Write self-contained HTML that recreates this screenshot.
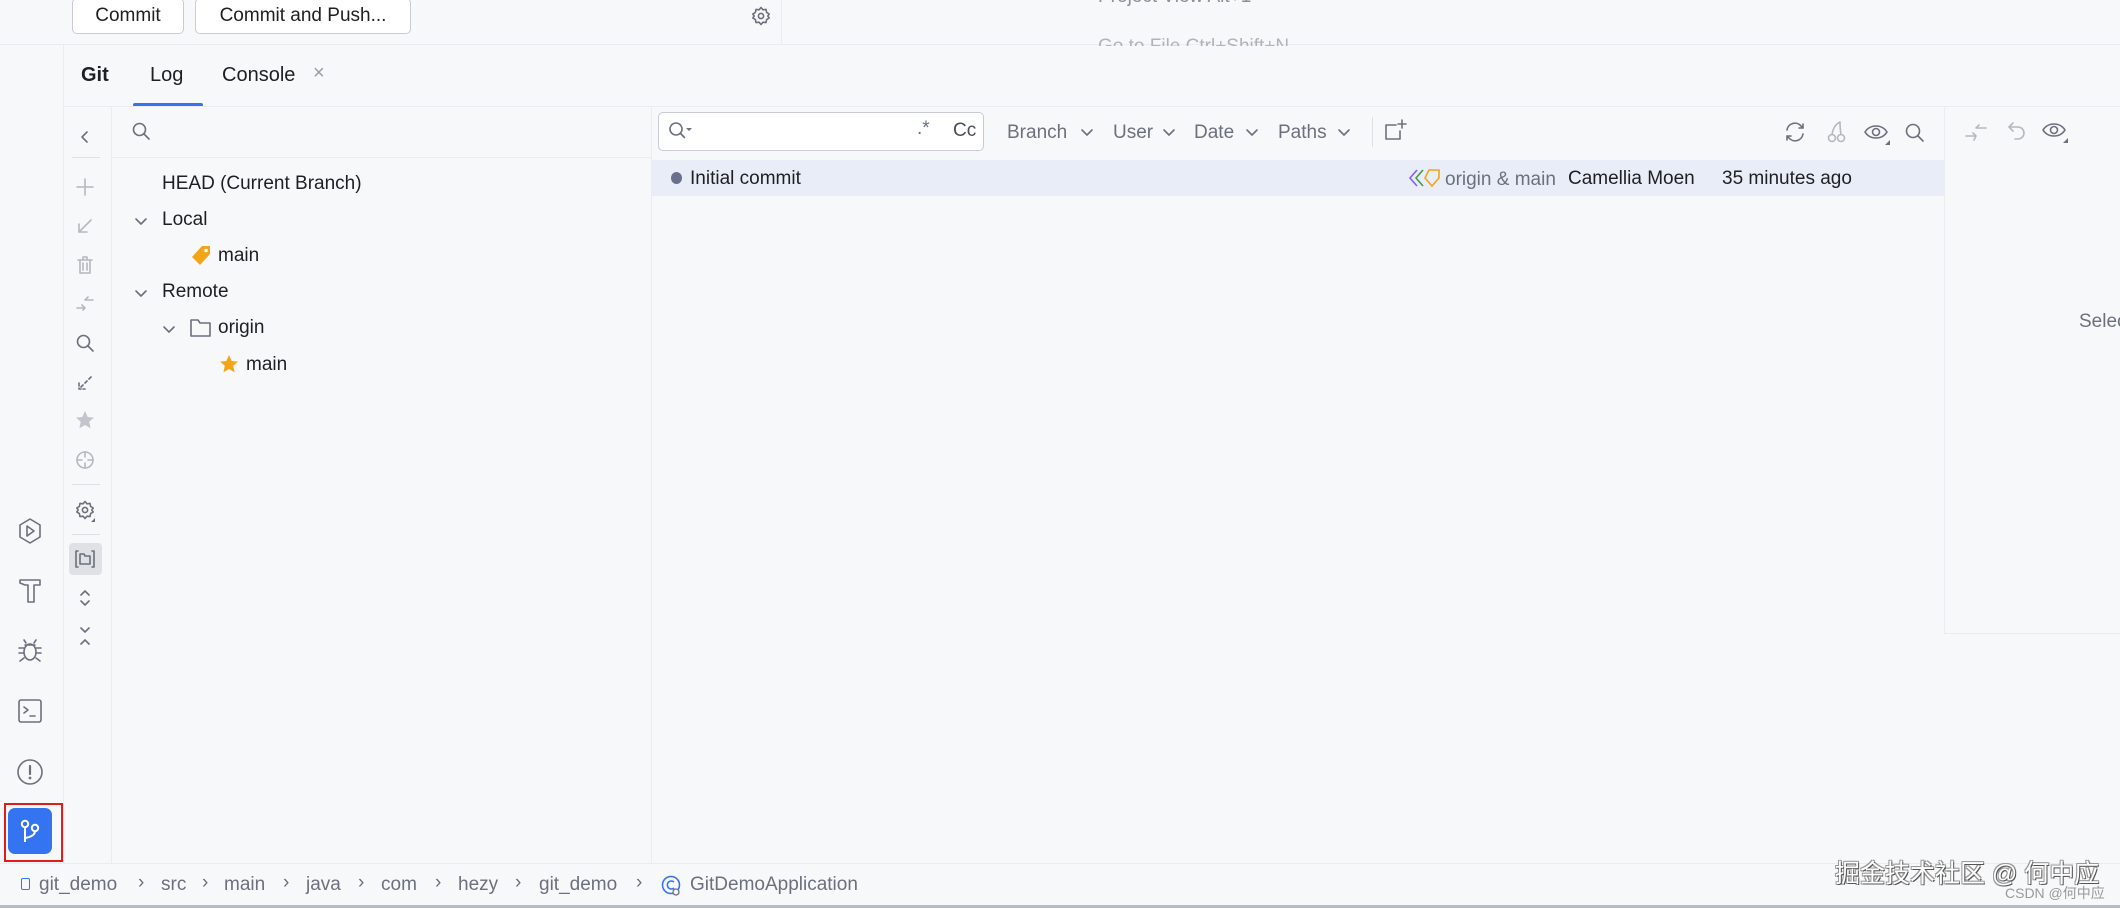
<!DOCTYPE html>
<html><head><meta charset="utf-8"><style>
*{margin:0;padding:0;box-sizing:border-box}
body{width:2120px;height:908px;overflow:hidden;background:#f7f8fa;font-family:"Liberation Sans","Noto Sans CJK SC",sans-serif;color:#1e1f22;position:relative}
.a{position:absolute;white-space:nowrap}
.t{font-size:19px}
.g{color:#6c707e}
svg{position:absolute;overflow:visible}
.ic{stroke:#6c707e;fill:none;stroke-width:1.6;stroke-linecap:round;stroke-linejoin:round}
.dis{stroke:#b4b8bf}
</style></head><body>
<div class="a" style="left:0;top:0;width:2120px;height:45px;background:#f7f8fa;border-bottom:1px solid #ebecf0"></div>
<div class="a" style="left:72px;top:-2px;width:112px;height:36px;border:1px solid #c9ccd6;border-radius:5px;background:#fff;font-size:19px;text-align:center;line-height:34px">Commit</div>
<div class="a" style="left:195px;top:-2px;width:216px;height:36px;border:1px solid #c9ccd6;border-radius:5px;background:#fff;font-size:19px;text-align:center;line-height:34px">Commit and Push...</div>
<svg style="left:751px;top:6px" width="20" height="20" viewBox="0 0 20 20"><path class="ic" d="M10 1.5l2 2.3 3-.4.6 3 2.6 1.6-1.4 2 1.4 2-2.6 1.6-.6 3-3-.4-2 2.3-2-2.3-3 .4-.6-3L1.8 12l1.4-2-1.4-2 2.6-1.6.6-3 3 .4z"/><circle class="ic" cx="10" cy="10" r="2.6"/></svg>
<div class="a" style="left:781px;top:0;width:1px;height:45px;background:#ebecf0"></div>
<div class="a g" style="left:1098px;top:-14px;font-size:19px;color:#8c8f96">Project View Alt+1</div>
<div class="a g" style="left:1098px;top:36px;font-size:19px;color:#b0b3ba;height:10px;overflow:hidden">Go to File Ctrl+Shift+N</div>

<div class="a" style="left:63px;top:45px;width:1px;height:818px;background:#ebecf0"></div>
<svg style="left:16px;top:517px" width="28" height="28" viewBox="0 0 28 28"><path class="ic" d="M14 2l10 6v12l-10 6-10-6V8z"/><path class="ic" d="M11 9l7 5-7 5z"/></svg>
<svg style="left:16px;top:577px" width="28" height="28" viewBox="0 0 28 28"><path class="ic" d="M4 3h20v5h-6v17h-6V8H9L4 6z"/></svg>
<svg style="left:16px;top:636px" width="28" height="28" viewBox="0 0 28 28"><ellipse class="ic" cx="14" cy="16" rx="6" ry="8"/><path class="ic" d="M10 7l-2-3M18 7l2-3M8 12H3M20 12h5M8 17H3M20 17h5M8 22l-4 3M20 22l4 3M9 9h10"/></svg>
<svg style="left:16px;top:697px" width="28" height="28" viewBox="0 0 28 28"><rect class="ic" x="3" y="3" width="22" height="22" rx="2"/><path class="ic" d="M8 10l4 3-4 3M14 19h5"/></svg>
<svg style="left:16px;top:758px" width="28" height="28" viewBox="0 0 28 28"><circle class="ic" cx="14" cy="14" r="12"/><path class="ic" d="M14 8v8" style="stroke-width:2.2"/><circle cx="14" cy="20" r="1.4" fill="#6c707e"/></svg>
<div class="a" style="left:4px;top:803px;width:59px;height:59px;border:2px solid #e21b1b"></div>
<div class="a" style="left:8px;top:808px;width:44px;height:46px;background:#3574f0;border-radius:7px"></div>
<svg style="left:16px;top:817px" width="28" height="28" viewBox="0 0 28 28"><circle cx="9" cy="7" r="3.2" fill="none" stroke="#fff" stroke-width="2"/><circle cx="19" cy="11" r="3.2" fill="none" stroke="#fff" stroke-width="2"/><path d="M9 10v15M19 14c0 4-4 6-10 7" fill="none" stroke="#fff" stroke-width="2"/></svg>

<div class="a" style="left:81px;top:64px;font-size:20px;font-weight:bold">Git</div>
<div class="a" style="left:150px;top:64px;font-size:20px">Log</div>
<div class="a" style="left:222px;top:64px;font-size:20px">Console</div>
<div class="a g" style="left:313px;top:62px;font-size:20px;color:#9a9da4">×</div>
<div class="a" style="left:133px;top:103px;width:70px;height:4px;background:#3574f0;border-radius:2px"></div>
<div class="a" style="left:64px;top:106px;width:2056px;height:1px;background:#ebecf0"></div>

<div class="a" style="left:111px;top:107px;width:1px;height:756px;background:#ebecf0"></div>
<svg style="left:77px;top:129px" width="16" height="16"><path class="ic" d="M10 3L5 8l5 5"/></svg>
<div class="a" style="left:72px;top:157px;width:28px;height:1px;background:#dfe1e5"></div>
<svg style="left:75px;top:177px" width="20" height="20"><path class="ic dis" d="M10 2v16M2 10h16"/></svg>
<svg style="left:75px;top:216px" width="20" height="20"><path class="ic dis" d="M16 4L4 16M4 8v8h8"/></svg>
<svg style="left:75px;top:255px" width="20" height="20"><path class="ic dis" d="M3 5h14M8 5V2h4v3M5 5v13h10V5M8 8v7M12 8v7"/></svg>
<svg style="left:75px;top:294px" width="20" height="20"><path class="ic dis" d="M2 14h8l-3-3M18 6h-8l3-3M10 14l-2 2"/></svg>
<svg style="left:75px;top:333px" width="20" height="20"><circle class="ic" cx="8.5" cy="8.5" r="6"/><path class="ic" d="M13 13l5 5"/></svg>
<svg style="left:75px;top:373px" width="20" height="20"><path class="ic" d="M4 10v6h6M6 14l2-2M10 10l2-2M14 6l2-2" stroke-dasharray="3 2"/></svg>
<svg style="left:75px;top:410px" width="20" height="20"><path d="M10 1l2.7 6 6.3.6-4.8 4.2 1.4 6.4L10 15l-5.6 3.2 1.4-6.4L1 7.6 7.3 7z" fill="#c2c5cc"/></svg>
<svg style="left:75px;top:450px" width="20" height="20"><circle class="ic dis" cx="10" cy="10" r="8"/><path class="ic dis" d="M10 2v5M10 13v5M2 10h5M13 10h5"/></svg>
<div class="a" style="left:72px;top:484px;width:28px;height:1px;background:#dfe1e5"></div>
<svg style="left:75px;top:500px" width="20" height="20"><path class="ic" d="M10 1.5l2 2.3 3-.4.6 3 2.6 1.6-1.4 2 1.4 2-2.6 1.6-.6 3-3-.4-2 2.3-2-2.3-3 .4-.6-3L1.8 12l1.4-2-1.4-2 2.6-1.6.6-3 3 .4z"/><circle class="ic" cx="10" cy="10" r="2.6"/><path d="M20 18v4h-4z" fill="#6c707e"/></svg>
<div class="a" style="left:72px;top:534px;width:28px;height:1px;background:#dfe1e5"></div>
<div class="a" style="left:69px;top:543px;width:33px;height:32px;background:#dfe1e5;border-radius:4px"></div>
<svg style="left:75px;top:549px" width="20" height="20"><path class="ic" d="M3 2H1v16h2M17 2h2v16h-2M5 5h4l1 2h5v8H5z"/></svg>
<svg style="left:77px;top:588px" width="16" height="20"><path class="ic" d="M4 7l4-4 4 4M4 13l4 4 4-4"/></svg>
<svg style="left:77px;top:626px" width="16" height="20"><path class="ic" d="M4 2l4 4 4-4M4 18l4-4 4 4"/></svg>

<svg style="left:131px;top:121px" width="20" height="20"><circle class="ic" cx="8.5" cy="8.5" r="6"/><path class="ic" d="M13 13l5 5"/></svg>
<div class="a" style="left:112px;top:157px;width:539px;height:1px;background:#ebecf0"></div>
<div class="a t" style="left:162px;top:173px">HEAD (Current Branch)</div>
<svg style="left:135px;top:215px" width="12" height="12"><path class="ic" d="M1 4l5 5 5-5"/></svg>
<div class="a t" style="left:162px;top:209px">Local</div>
<svg style="left:190px;top:245px" width="22" height="22" viewBox="0 0 22 22"><path d="M12 1h8v8L10 20 2 12z" fill="#f2a516"/><circle cx="16" cy="5.5" r="1.8" fill="#fff"/></svg>
<div class="a t" style="left:218px;top:245px">main</div>
<svg style="left:135px;top:287px" width="12" height="12"><path class="ic" d="M1 4l5 5 5-5"/></svg>
<div class="a t" style="left:162px;top:281px">Remote</div>
<svg style="left:163px;top:323px" width="12" height="12"><path class="ic" d="M1 4l5 5 5-5"/></svg>
<svg style="left:190px;top:318px" width="22" height="20"><path class="ic" d="M1 2h7l2 3h10v13H1z"/></svg>
<div class="a t" style="left:218px;top:317px">origin</div>
<svg style="left:219px;top:354px" width="20" height="20"><path d="M10 1l2.7 6 6.3.6-4.8 4.2 1.4 6.4L10 15l-5.6 3.2 1.4-6.4L1 7.6 7.3 7z" fill="#f2a516"/></svg>
<div class="a t" style="left:246px;top:354px">main</div>

<div class="a" style="left:651px;top:107px;width:1px;height:756px;background:#ebecf0"></div>
<div class="a" style="left:658px;top:112px;width:326px;height:39px;border:1px solid #c9ccd6;border-radius:5px;background:#fff"></div>
<svg style="left:668px;top:121px" width="26" height="20"><circle class="ic" cx="8" cy="8" r="6"/><path class="ic" d="M12.5 12.5l4 4"/><path d="M18 7h6l-3 3z" fill="#6c707e"/></svg>
<div class="a g" style="left:917px;top:118px;font-size:19px">.*</div>
<div class="a g" style="left:953px;top:120px;font-size:19px;color:#4c4f55">Cc</div>
<div class="a g t" style="left:1007px;top:122px">Branch</div><svg style="left:1081px;top:128px" width="12" height="10"><path class="ic" d="M1 2l5 5 5-5"/></svg>
<div class="a g t" style="left:1113px;top:122px">User</div><svg style="left:1163px;top:128px" width="12" height="10"><path class="ic" d="M1 2l5 5 5-5"/></svg>
<div class="a g t" style="left:1194px;top:122px">Date</div><svg style="left:1246px;top:128px" width="12" height="10"><path class="ic" d="M1 2l5 5 5-5"/></svg>
<div class="a g t" style="left:1278px;top:122px">Paths</div><svg style="left:1338px;top:128px" width="12" height="10"><path class="ic" d="M1 2l5 5 5-5"/></svg>
<div class="a" style="left:1372px;top:117px;width:1px;height:30px;background:#dfe1e5"></div>
<svg style="left:1384px;top:119px" width="24" height="24"><path class="ic" d="M12 6H2v14h14v-8M18 1v8M14 5h8"/></svg>
<svg style="left:1784px;top:121px" width="22" height="22"><path class="ic" d="M3 9a8 8 0 0 1 14-4l2 2M19 13a8 8 0 0 1-14 4l-2-2M19 3v4h-4M3 19v-4h4"/></svg>
<svg style="left:1826px;top:120px" width="22" height="24"><circle class="ic dis" cx="6" cy="18" r="3.5"/><circle class="ic dis" cx="15" cy="18" r="3.5"/><path class="ic dis" d="M6 14.5C7 8 10 4 14 2M15 14.5C14 9 14 5 14 2"/></svg>
<svg style="left:1864px;top:121px" width="26" height="24"><path class="ic" d="M1 11c5-8 17-8 22 0-5 8-17 8-22 0z"/><circle class="ic" cx="12" cy="11" r="3.5"/><path d="M26 19v5h-5z" fill="#6c707e"/></svg>
<svg style="left:1904px;top:122px" width="22" height="22"><circle class="ic" cx="9" cy="9" r="6.5"/><path class="ic" d="M14 14l5 5"/></svg>

<div class="a" style="left:652px;top:160px;width:1292px;height:36px;background:#e9edf7"></div>
<div class="a" style="left:671px;top:172px;width:11px;height:12px;border-radius:50%;background:#6b6f8e"></div>
<div class="a t" style="left:690px;top:168px">Initial commit</div>
<svg style="left:1408px;top:167px" width="34" height="22" viewBox="0 0 34 22"><path d="M9 3L2 11l7 8" fill="none" stroke="#8a5cf5" stroke-width="1.6"/><path d="M15 3l-7 8 7 8" fill="none" stroke="#3f9c4a" stroke-width="1.6"/><path d="M21 3h10v8l-7 8-7-8z" fill="none" stroke="#f2a516" stroke-width="1.6"/></svg>
<div class="a g t" style="left:1445px;top:169px">origin &amp; main</div>
<div class="a t" style="left:1568px;top:168px">Camellia Moen</div>
<div class="a t" style="left:1722px;top:168px">35 minutes ago</div>

<div class="a" style="left:1944px;top:107px;width:1px;height:527px;background:#ebecf0"></div>
<div class="a" style="left:1944px;top:633px;width:176px;height:1px;background:#ebecf0"></div>
<svg style="left:1964px;top:120px" width="24" height="24"><path class="ic dis" d="M2 16h10l-3-3M22 8H12l3-3M12 16l-2 4"/></svg>
<svg style="left:2006px;top:120px" width="22" height="22"><path class="ic dis" d="M7 3L3 7l4 4M3 7h9a6 6 0 0 1 0 12H9"/></svg>
<svg style="left:2042px;top:119px" width="26" height="24"><path class="ic" d="M1 11c5-8 17-8 22 0-5 8-17 8-22 0z"/><circle class="ic" cx="12" cy="11" r="3.5"/><path d="M26 19v5h-5z" fill="#6c707e"/></svg>
<div class="a g t" style="left:2079px;top:311px">Select</div>

<div class="a" style="left:0;top:863px;width:2120px;height:42px;background:#f7f8fa;border-top:1px solid #ebecf0"></div>
<div class="a" style="left:21px;top:878px;width:9px;height:12px;border:1.6px solid #3574f0;border-radius:2px"></div>
<div class="a g t" style="left:39px;top:874px">git_demo</div>
<div class="a g t" style="left:161px;top:874px">src</div>
<div class="a g t" style="left:224px;top:874px">main</div>
<div class="a g t" style="left:306px;top:874px">java</div>
<div class="a g t" style="left:381px;top:874px">com</div>
<div class="a g t" style="left:458px;top:874px">hezy</div>
<div class="a g t" style="left:539px;top:874px">git_demo</div>
<svg style="left:661px;top:875px" width="22" height="22"><circle cx="10" cy="10" r="8.5" fill="none" stroke="#3574f0" stroke-width="1.6"/><path d="M13 7a4 4 0 1 0 0 6" fill="none" stroke="#3574f0" stroke-width="1.6"/><circle cx="15" cy="17" r="3" fill="#f7f8fa" stroke="#6c707e" stroke-width="1.3"/></svg>
<div class="a g t" style="left:690px;top:874px">GitDemoApplication</div>
<div class="a g" style="left:138px;top:872px;font-size:19px">›</div>
<div class="a g" style="left:202px;top:872px;font-size:19px">›</div>
<div class="a g" style="left:283px;top:872px;font-size:19px">›</div>
<div class="a g" style="left:358px;top:872px;font-size:19px">›</div>
<div class="a g" style="left:435px;top:872px;font-size:19px">›</div>
<div class="a g" style="left:515px;top:872px;font-size:19px">›</div>
<div class="a g" style="left:636px;top:872px;font-size:19px">›</div>

<div class="a" style="left:1835px;top:854px;font-size:25px;color:#fff;text-shadow:1px 1px 0 #555,-1px -1px 0 #999,1px -1px 0 #999,-1px 1px 0 #999">掘金技术社区 @ 何中应</div>
<div class="a" style="left:2005px;top:883px;font-size:14px;color:#999">CSDN @何中应</div>
<div class="a" style="left:0;top:905px;width:2120px;height:3px;background:#b8bcc2"></div>
</body></html>
